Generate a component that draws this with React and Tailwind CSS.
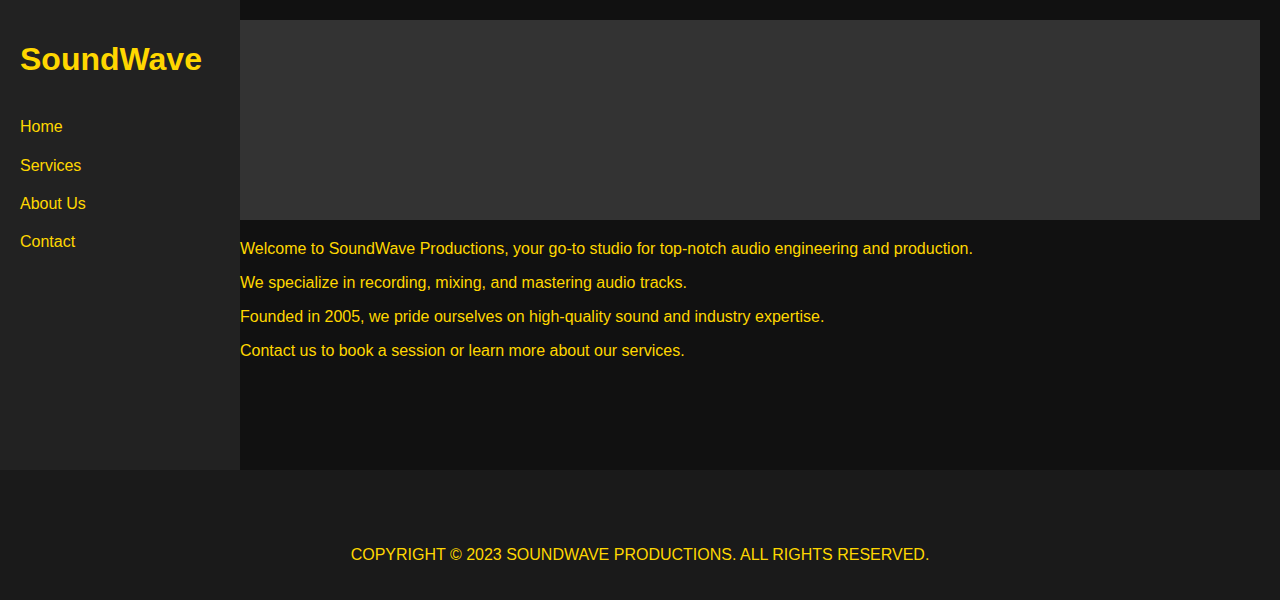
export default function App() {
  return (
    <div className="min-h-screen bg-[#111111] font-['Liberation_Sans',Arial,sans-serif] text-[#ffd700]">
      <div className="flex h-[470px]">
        <aside className="w-[240px] shrink-0 bg-[#222222] p-5">
          <h1 className="mt-[20.5px] text-[32px] font-bold leading-[1.15]">SoundWave</h1>
          <ul className="mt-[31px] text-base leading-[1.15]">
            {['Home', 'Services', 'About Us', 'Contact'].map(l => (
              <li key={l} className="py-[10px]">
                <a href="#">{l}</a>
              </li>
            ))}
          </ul>
        </aside>
        <main className="flex-1 pt-5 pr-5">
          <div className="h-[200px] bg-[#333333]" />
          <div className="flex flex-col gap-4 pt-[19.5px] text-base leading-[18px]">
            <p>Welcome to SoundWave Productions, your go-to studio for top-notch audio engineering and production.</p>
            <p>We specialize in recording, mixing, and mastering audio tracks.</p>
            <p>Founded in 2005, we pride ourselves on high-quality sound and industry expertise.</p>
            <p>Contact us to book a session or learn more about our services.</p>
          </div>
        </main>
      </div>
      <footer className="h-[130px] bg-[#1a1a1a] pt-[75.5px] text-center text-base uppercase leading-[1.15]">
        Copyright © 2023 SoundWave Productions. All rights reserved.
      </footer>
    </div>
  )
}
